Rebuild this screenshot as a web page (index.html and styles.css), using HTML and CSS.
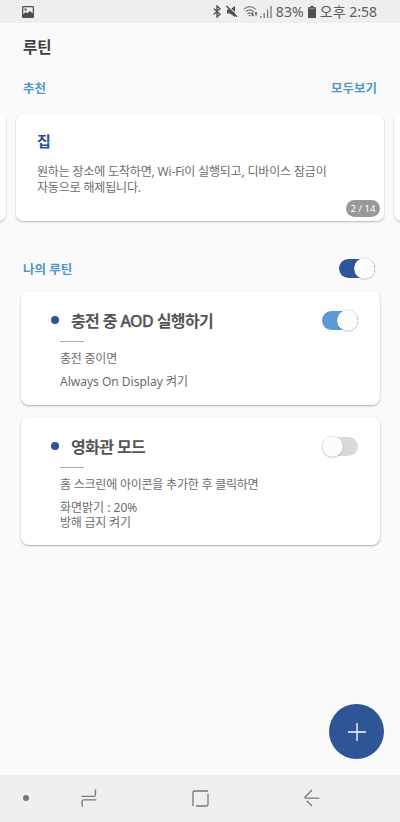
FILE: index.html
```html
<!DOCTYPE html>
<html lang="ko">
<head>
<meta charset="utf-8">
<title>루틴</title>
<link rel="stylesheet" href="styles.css">
</head>
<body>
<div class="screen">
  <header class="status">
    <svg class="ic-picture" width="12" height="12" viewBox="0 0 12 12"><path fill="#505050" fill-rule="evenodd" d="M1.2 0h9.6A1.2 1.2 0 0 1 12 1.200v9.600A1.200 1.200 0 0 1 10.800 12H1.200A1.200 1.200 0 0 1 0 10.800V1.200A1.200 1.200 0 0 1 1.200 0zM1.300 1.300v7l2.400-2.300 1.500 1.300 2.600-2.300 2.900 2.300v-6zM2.500 2.600h2v1.800h-2z"/></svg>
    <div class="status-right">
      <svg class="ic-bt" width="8" height="13" viewBox="0 0 8 13"><path d="M.7 3.600L7 9.200 4 12V1l3 2.800L.7 9.400" fill="none" stroke="#555" stroke-width="1.400"/></svg>
      <svg class="ic-mute" width="12" height="13" viewBox="0 0 12 13"><path d="M1 4.500h3L9 1v11L4 8.500H1z" fill="#505050"/><path d="M1.300 0L12 11" stroke="#efefef" stroke-width="1.100"/><path d="M.5 1l10.400 10.800" stroke="#505050" stroke-width="1.500"/></svg>
      <svg class="ic-wifi" width="16" height="13" viewBox="0 0 16 13"><g fill="none" stroke="#777" stroke-width="1.100"><path d="M.7 4.300Q6.700-1 12.700 4.300M2.600 6.600q4.100-3.500 8.200 0M4.500 8.800q2.200-1.900 4.400 0"/></g><path d="M5.500 10l1.200 1.200L8 10zM8.200 9.400h1V7h1v2.400h1L9.700 11.800zM11.500 8.800L13 6.500l1.500 2.300h-1v2.400h-1V8.800z" fill="#555"/></svg>
      <svg class="ic-signal" width="12" height="12" viewBox="0 0 12 12"><path d="M1 10v2M4.200 7v5M7.600 3.600V12M11 0v12" stroke="#777" stroke-width="1.300"/></svg>
      <span class="pct">83%</span>
      <svg class="ic-batt" width="8" height="12" viewBox="0 0 8 12"><path d="M2.500 0h3v1.200H8V12H0V1.200h2.500z" fill="#505050"/><path d="M1.200 2.700h5.600" stroke="#aaa" stroke-width=".8"/></svg>
      <span class="clock">오후 2:58</span>
    </div>
  </header>

  <h1 class="title">루틴</h1>

  <div class="section-row recommend">
    <span class="label">추천</span>
    <span class="label see-all">모두보기</span>
  </div>

  <div class="carousel">
    <div class="slide"></div>
    <article class="slide">
      <h2 class="slide-title">집</h2>
      <p class="slide-text">원하는 장소에 도착하면, Wi-Fi이 실행되고, 디바이스 잠금이<br>자동으로 해제됩니다.</p>
      <span class="counter">2 / 14</span>
    </article>
    <div class="slide"></div>
  </div>

  <div class="section-row mine">
    <span class="label mine-label">나의 루틴</span>
    <span class="switch on navy"></span>
  </div>

  <article class="routine first">
    <div class="routine-head">
      <i class="bullet"></i>
      <h3 class="name name-aod">충전 중 <span class="latin">AOD</span> 실행하기</h3>
      <span class="switch on sky"></span>
    </div>
    <hr class="rule">
    <p class="cond">충전 중이면</p>
    <p class="action action-aod">Always On Display 켜기</p>
  </article>

  <article class="routine second">
    <div class="routine-head">
      <i class="bullet"></i>
      <h3 class="name">영화관 모드</h3>
      <span class="switch off"></span>
    </div>
    <hr class="rule">
    <p class="cond">홈 스크린에 아이콘을 추가한 후 클릭하면</p>
    <p class="action"><span class="wide">화면밝기 : 20%</span><br>방해 금지 켜기</p>
  </article>

  <div class="fab-row">
    <div class="fab"><svg width="18" height="18" viewBox="0 0 18 18"><path d="M9 0v18M0 9h18" stroke="#fff" stroke-width="1.300"/></svg></div>
  </div>

  <nav class="navbar">
    <i class="nav-dot"></i>
    <svg class="nav-recent" width="16" height="18" viewBox="0 0 16 18"><path d="M.5 7.300H13Q14.500 7.300 14.500 5.800V.5M15.300 10.800H2.600Q1.100 10.800 1.100 12.300V17.800" fill="none" stroke="#777" stroke-width="1.300"/></svg>
    <svg class="nav-home" width="17" height="17" viewBox="0 0 17 17"><path d="M1 16V2.500Q1 1 2.500 1H16M16 4v10.500q0 1.500-1.500 1.500H4" fill="none" stroke="#777" stroke-width="1.300"/></svg>
    <svg class="nav-back" width="16" height="18" viewBox="0 0 16 18"><path d="M8 1L1.300 7.700Q.5 8.800 1.600 9.200H15.500M2.800 11.700L8 17" fill="none" stroke="#777" stroke-width="1.300"/></svg>
  </nav>
</div>
</body>
</html>
```
FILE: styles.css
```css
* { box-sizing: border-box; margin: 0; padding: 0; }
body {
  background: #fafafa;
  font-family: "Noto Sans", "Noto Sans CJK KR", sans-serif;
  color: #6c6c6c;
  white-space: nowrap;
}
svg { display: block; flex: none; }
.screen {
  width: 400px;
  height: 822px;
  display: flex;
  flex-direction: column;
  overflow: hidden;
}
.status {
  height: 23px;
  flex: none;
  display: flex;
  align-items: center;
  justify-content: space-between;
  background: #efefef;
  padding: 0 23px 0 22px;
}
.status-right {
  display: flex;
  align-items: center;
  font-size: 14px;
  line-height: 23px;
  color: #5c5c5c;
}
.ic-mute { margin-left: 5px; }
.ic-wifi { margin-left: 5px; }
.ic-signal { margin-left: 1px; }
.pct { margin-left: 4px; letter-spacing: .1px; }
.ic-batt { margin-left: 4px; }
.clock { margin-left: 4px; }
.title {
  margin: 13px 0 0 23px;
  height: 22px;
  font-size: 15.500px;
  line-height: 22px;
  color: #404040;
}
.section-row {
  display: flex;
  justify-content: space-between;
  align-items: center;
  flex: none;
  height: 22px;
  padding: 0 23px;
}
.recommend { margin-top: 18px; }
.label { font-size: 12.500px; font-weight: 700; color: #5296ca; }
.carousel {
  margin-top: 16px;
  display: flex;
  justify-content: center;
  gap: 10px;
  flex: none;
}
.slide {
  position: relative;
  width: 368px;
  height: 107px;
  flex: none;
  padding: 16px 21px;
  border-radius: 7px;
  background: #fff;
  box-shadow: 0 1px 2px rgba(0, 0, 0, .28);
}
.slide-title { font-size: 15px; line-height: 22px; color: #2e5192; }
.slide-text { margin-top: 12px; font-size: 12px; line-height: 15.500px; letter-spacing: -.170px; }
.counter {
  position: absolute;
  right: 4px;
  bottom: 4px;
  width: 34px;
  height: 17px;
  border-radius: 9px;
  background: #999;
  color: #fff;
  font-size: 9.500px;
  line-height: 17px;
  text-align: center;
}
.mine { margin-top: 36px; padding-right: 25px; }
.switch {
  display: flex;
  align-items: center;
  width: 36px;
  height: 19px;
  border-radius: 10px;
  flex: none;
}
.switch::after {
  content: "";
  width: 21px;
  height: 21px;
  flex: none;
  border-radius: 50%;
  background: #fcfcfc;
  box-shadow: 0 0 1px rgba(0, 0, 0, .35), 0 1px 1px rgba(0, 0, 0, .15);
}
.on { justify-content: flex-end; }
.navy { background: #2e5597; }
.sky { background: #5a9ad5; }
.off { background: #dadada; }
.routine {
  flex: none;
  margin: 0 20px 0 21px;
  padding: 17px 22px 0 30px;
  border-radius: 8px;
  background: #fff;
  box-shadow: 0 1px 2px rgba(0, 0, 0, .32);
}
.first { margin-top: 12px; height: 114px; }
.second { margin-top: 12px; height: 128px; }
.routine-head { display: flex; align-items: center; height: 24px; }
.bullet { width: 8px; height: 8px; border-radius: 50%; background: #2c5298; flex: none; }
.name { flex: 1; margin-left: 12px; padding-top: 2px; font-size: 16px; line-height: 24px; letter-spacing: -.600px; color: #555; }
.latin { font-weight: 500; -webkit-text-stroke: .4px #555; }
.rule { width: 24px; height: 1px; margin: 9px 0 0 9px; border: 0; background: #aaa; }
.cond, .action { margin-left: 9px; font-size: 12px; line-height: 15px; letter-spacing: -.220px; }
.cond { margin-top: 9px; }
.action { margin-top: 8px; }
.action-aod, .wide { letter-spacing: 0; }
.fab-row { display: flex; justify-content: flex-end; margin-top: auto; padding: 0 16px 16px 0; }
.fab {
  width: 55px;
  height: 55px;
  border-radius: 50%;
  background: #2e5596;
  display: flex;
  align-items: center;
  justify-content: center;
}
.navbar {
  flex: none;
  height: 47px;
  display: flex;
  align-items: center;
  background: #efefef;
  padding: 0 0 1px 23px;
}
.nav-dot { width: 6px; height: 6px; border-radius: 50%; background: #777; }
.nav-recent { margin-left: 52px; }
.nav-home { margin-left: 95px; }
.nav-back { margin-left: 95px; }
```
